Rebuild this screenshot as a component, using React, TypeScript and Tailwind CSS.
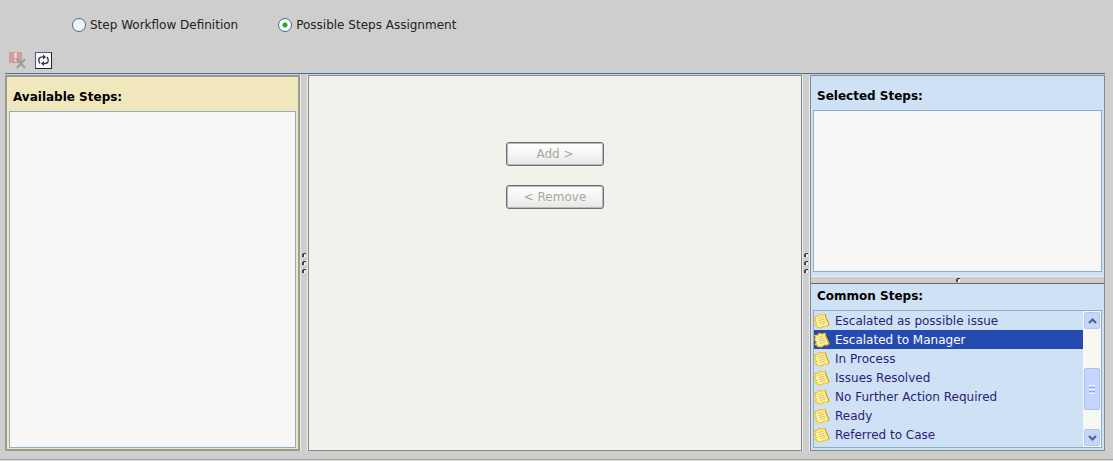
import { useState } from "react";

const commonSteps = [
  "Escalated as possible issue",
  "Escalated to Manager",
  "In Process",
  "Issues Resolved",
  "No Further Action Required",
  "Ready",
  "Referred to Case",
  "",
];

function NoteIcon() {
  return (
    <svg width="16" height="16" viewBox="0 0 16 16" className="shrink-0" aria-hidden="true">
      <path d="M.7 3.700L4 3.200L5.200 1.500L8 2.200L11.200 1.200L11.500 4L13 7.200L15 11.500L13.500 12.800L10 13L7.500 14.800L3.500 14.500L3.200 13L1.200 12.500L2.500 10.500L.7 7L2 5.500Z" fill="#fff4a6" stroke="#f6c21d" strokeWidth="1.200" />
      <path d="M4 5.500L9.500 4M4.500 7.500L10.500 6M5 9.500L11.500 8M6 11.500L12 10" stroke="#d3bd68" strokeWidth=".9" />
      <path d="M11.500 1.500L11.800 4L15 11.500L13.500 12.800" fill="none" stroke="#d99d16" />
    </svg>
  );
}

function Dot() {
  return (
    <svg width="4" height="4" viewBox="0 0 4 4" className="shrink-0" aria-hidden="true">
      <path d="M1 0H4V1H2V4H0V1H1Z" fill="#444" />
      <path d="M2 2H4V4H2Z" fill="#f0f0f0" />
    </svg>
  );
}

function Splitter() {
  return (
    <div role="separator" aria-orientation="vertical" className="flex w-2 shrink-0 flex-col items-center justify-center gap-1 border-x border-[#ececec] bg-[#cecece]">
      <Dot />
      <Dot />
      <Dot />
    </div>
  );
}

function Choice({ label, checked, onChange }: { label: string; checked: boolean; onChange: () => void }) {
  return (
    <label className="flex items-center gap-1">
      <input
        type="radio"
        name="view"
        checked={checked}
        onChange={onChange}
        className="size-[14px] appearance-none rounded-full border border-[#3d6a97] bg-[#f4f4f0] checked:bg-[radial-gradient(circle,#22a722_0_2px,#fbfbf8_3px)]"
      />
      {label}
    </label>
  );
}

function ScrollButton({ label, d }: { label: string; d: string }) {
  return (
    <button type="button" aria-label={label} className="flex h-[17px] w-full items-center justify-center rounded-xs border border-[#b3c6f5] bg-[#c5d5fb]">
      <svg width="9" height="6" viewBox="0 0 9 6" aria-hidden="true">
        <path d={d} fill="none" stroke="#4d6185" strokeWidth="2" />
      </svg>
    </button>
  );
}

const moveButton =
  "h-6 w-[98px] rounded-[3px] border border-[#6f6f6f] bg-linear-to-b from-white via-[#f5f5f5] to-[#e6e6e6] leading-4 text-[#aaa998] inset-ring inset-ring-[#b9b9b9]";

export default function App() {
  const [view, setView] = useState("assignment");
  const [current, setCurrent] = useState(1);

  return (
    <div className="flex min-h-screen flex-col border-b border-[#d6d6d2] bg-[#cecece] pl-[5px] pr-2 font-['DejaVu_Sans',sans-serif] text-xs leading-4 text-[#222]">
      <fieldset className="flex gap-10 px-[67px] pt-[17px]">
        <Choice label="Step Workflow Definition" checked={view === "definition"} onChange={() => setView("definition")} />
        <Choice label="Possible Steps Assignment" checked={view === "assignment"} onChange={() => setView("assignment")} />
      </fieldset>

      <div className="flex h-[41px] items-end gap-2 border-b border-[#4c6f9f] px-1 pb-1" role="toolbar" aria-label="Steps">
        <button type="button" disabled aria-label="Delete">
          <svg width="18" height="18" viewBox="0 0 18 18" aria-hidden="true">
            <path d="M0 1H13V12H0Z" fill="#cf9d9d" />
            <path d="M5 2H8L7.500 7H5.500Z M5.500 8.500H7.500V10.500H5.500Z" fill="#eddcdc" />
            <path d="M8 8L16 17M16 8L8 17" stroke="#9b9b9b" strokeWidth="2" />
          </svg>
        </button>
        <button type="button" aria-label="Refresh">
          <svg width="17" height="17" viewBox="0 0 17 17" aria-hidden="true">
            <path d="M0 0H17V17H0Z" fill="#222" />
            <path d="M0 0H16V16H0Z" fill="#5c5292" />
            <path d="M1 1H16V16H1Z" fill="#f7f7fa" />
            <path d="M5 11.500Q3 9 4 6.500Q5.500 4.500 9 5M12 5Q14 7.500 13 10Q11.500 12 8 11.500" fill="none" stroke="#34343e" strokeWidth="1.400" />
            <path d="M8 2.500L11 5L8 7.500ZM9 9L6 11.500L9 14Z" fill="#34343e" />
          </svg>
        </button>
      </div>

      <main className="flex flex-1 pt-px pb-2">
        <section className="flex w-[295px] shrink-0 flex-col border-2 border-[#9b9994] bg-[#f1e7bd] px-0.5 pb-px">
          <h2 id="available" className="px-1 pt-3 pb-1.5 font-bold text-black">Available Steps:</h2>
          <ul role="listbox" aria-labelledby="available" className="flex-1 border border-[#8eacc6] bg-[#f8f7f5]" />
        </section>

        <Splitter />

        <section className="flex min-w-0 flex-1 flex-col items-center gap-[19px] border border-[#888] bg-[#f1f2eb] pt-[66px]">
          <button type="button" disabled className={moveButton}>Add &gt;</button>
          <button type="button" disabled className={moveButton}>&lt; Remove</button>
        </section>

        <Splitter />

        <div className="flex w-[295px] shrink-0 flex-col border border-[#888] bg-[#cfe1f5]">
          <section className="flex flex-1 flex-col px-0.5 pb-1">
            <h2 id="selected" className="px-1 pt-3 pb-1.5 font-bold text-black">Selected Steps:</h2>
            <ul role="listbox" aria-labelledby="selected" className="flex-1 border border-[#8eacc6] bg-[#f8f7f5]" />
          </section>

          <div role="separator" className="flex h-2 items-center justify-center border-t border-b border-t-[#ececec] border-b-[#666] bg-[#cecece]">
            <Dot />
          </div>

          <section className="px-0.5 pb-0.5">
            <h2 id="common" className="px-1 pt-1 pb-1.5 font-bold text-black">Common Steps:</h2>
            <div className="flex h-[138px] border border-[#8eacc6]">
              <ul role="listbox" aria-labelledby="common" className="min-w-0 flex-1 overflow-hidden text-[#2b1e78]">
                {commonSteps.map((step, i) => (
                  <li
                    key={step}
                    role="option"
                    aria-selected={i === current}
                    onClick={() => setCurrent(i)}
                    className="flex h-[19px] items-center gap-[5px] aria-selected:bg-[#254bb0] aria-selected:text-white"
                  >
                    <NoteIcon />
                    {step}
                  </li>
                ))}
              </ul>
              <div className="flex w-[18px] flex-col bg-[#f8f8f3] p-px">
                <ScrollButton label="Scroll up" d="M1 5L4.500 1.500L8 5" />
                <div className="flex flex-1 flex-col justify-end pb-[19px]">
                  <div className="flex h-[42px] flex-col items-center justify-center gap-px rounded-xs border border-[#a9c0f4] bg-[#c5d5fd]">
                    <span className="h-px w-1.5 bg-[#edf4ff]" />
                    <span className="h-px w-1.5 bg-[#8cabef]" />
                    <span className="h-px w-1.5 bg-[#edf4ff]" />
                    <span className="h-px w-1.5 bg-[#8cabef]" />
                    <span className="h-px w-1.5 bg-[#edf4ff]" />
                  </div>
                </div>
                <ScrollButton label="Scroll down" d="M1 1L4.500 4.500L8 1" />
              </div>
            </div>
          </section>
        </div>
      </main>
      <div className="-mr-2 -ml-[5px] h-px bg-[#aaa9a0]" />
    </div>
  );
}
